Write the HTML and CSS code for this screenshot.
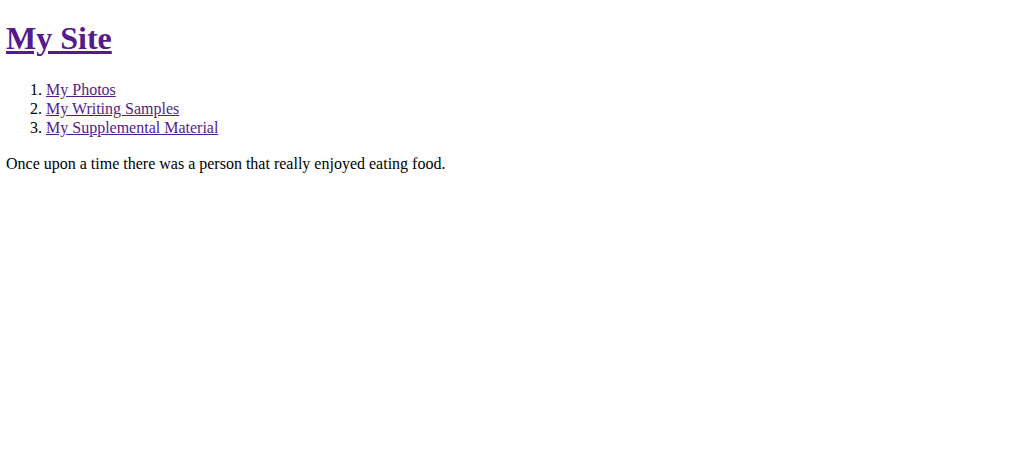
FILE: index.html
```html
<!DOCTYPE html>
<html>
<head>
<meta charset="utf-8">
<link rel="stylesheet" href="styles.css">
</head>
<body class="page">
<h1 class="title"><a class="link" href="#">My Site</a></h1>
<ol class="nav">
<li><a class="link" href="#">My Photos</a></li>
<li><a class="link" href="#">My Writing Samples</a></li>
<li><a class="link" href="#">My Supplemental Material</a></li>
</ol>
<p class="story">Once upon a time there was a person that really enjoyed eating food.</p>
</body>
</html>
```
FILE: styles.css
```css
.page {
  margin: 6px;
  font-family: "Liberation Serif", "Times New Roman", serif;
  font-size: 16px;
  line-height: 19px;
  color: #000;
  background: #fff;
}
.link {
  color: #551a8b;
  text-decoration: underline;
}
.title {
  font-size: 32px;
  line-height: 37px;
  margin: 14px 0 23px;
}
.nav {
  margin: 16px 0;
  padding-left: 40px;
}
.story {
  margin: 17px 0 16px;
}
```
